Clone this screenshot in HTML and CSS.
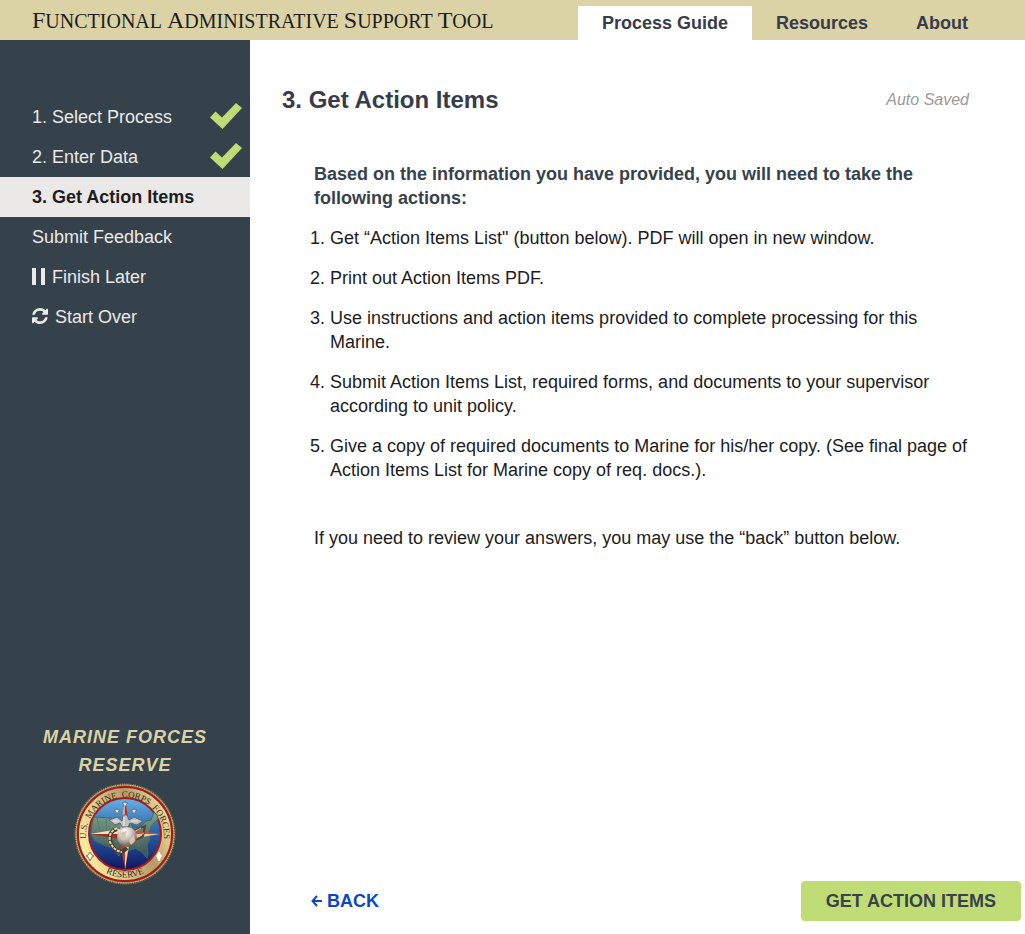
FILE: index.html
```html
<!DOCTYPE html>
<html lang="en">
<head>
<meta charset="utf-8">
<title>Functional Administrative Support Tool</title>
<link rel="stylesheet" href="styles.css">
</head>
<body>
<header class="topbar">
  <div class="brand"><span class="word">Functional</span> <span class="word">Administrative</span> <span class="word">Support</span> <span class="word">Tool</span></div>
  <nav class="tabs" aria-label="Main">
    <a class="tab tab-active" href="#guide">Process Guide</a>
    <a class="tab" href="#resources">Resources</a>
    <a class="tab" href="#about">About</a>
  </nav>
</header>
<div class="layout">
  <aside class="sidebar">
    <nav class="steps" aria-label="Steps">
      <a class="step" href="#select">1. Select Process
        <svg class="check" viewBox="0 0 32 28" aria-hidden="true"><path d="M0 15.500 5.500 9.500 12 15.500 26 1 32 6 12.500 27Z"/></svg></a>
      <a class="step" href="#enter">2. Enter Data
        <svg class="check" viewBox="0 0 32 28" aria-hidden="true"><path d="M0 15.500 5.500 9.500 12 15.500 26 1 32 6 12.500 27Z"/></svg></a>
      <a class="step step-active" href="#items" aria-current="step">3. Get Action Items</a>
      <a class="step" href="#feedback">Submit Feedback</a>
      <a class="step" href="#later"><svg class="pause" viewBox="0 0 13 17" aria-hidden="true"><path d="M0 0H4V17H0ZM9 0H13V17H9Z"/></svg>Finish Later</a>
      <a class="step" href="#restart"><svg class="refresh" viewBox="0 0 1536 1536" aria-hidden="true"><path d="M1511 928q0 5-1 7-64 268-268 434.500T764 1536q-146 0-282.500-55T238 1324l-129 129q-19 19-45 19t-45-19-19-45V960q0-26 19-45t45-19h448q26 0 45 19t19 45-19 45l-137 137q71 66 161 102t187 36q134 0 250-65t186-179q11-17 53-117 8-23 30-23h192q13 0 22.500 9.500t9.500 22.500zm25-800v448q0 26-19 45t-45 19h-448q-26 0-45-19t-19-45 19-45l138-138Q969 256 768 256q-134 0-250 65T332 500q-11 17-53 117-8 23-30 23H50q-13 0-22.500-9.500T18 608v-7q65-268 270-434.500T768 0q146 0 284 55.500T1297 212l130-129q19-19 45-19t45 19 19 45z"/></svg>Start Over</a>
    </nav>
    <div class="unit">
      <p class="unit-name">Marine Forces Reserve</p>
      <svg class="seal" viewBox="0 0 102 102" role="img" aria-label="U.S. Marine Corps Forces Reserve seal">
        <defs>
          <linearGradient id="gold" x1="0" y1=".7" x2="1" y2=".3"><stop offset="0" stop-color="#fff3a2"/><stop offset=".35" stop-color="#dcc88a"/><stop offset=".65" stop-color="#b59a68"/><stop offset="1" stop-color="#f5e3a0"/></linearGradient>
          <linearGradient id="sky" x1="0" y1="0" x2="0" y2="1"><stop offset="0" stop-color="#68b2e7"/><stop offset=".5" stop-color="#245da5"/><stop offset="1" stop-color="#10155c"/></linearGradient>
          <linearGradient id="land" x1="0" y1="0" x2="0" y2="1"><stop offset="0" stop-color="#7ba28b"/><stop offset="1" stop-color="#38514d"/></linearGradient>
          <radialGradient id="globe" cx=".4" cy=".25" r=".8"><stop offset="0" stop-color="#fff"/><stop offset=".45" stop-color="#c9c3bd"/><stop offset="1" stop-color="#5a4a44"/></radialGradient>
          <path id="arc-top" d="M13.500 64A39 39 0 1 1 88.500 64"/>
          <path id="arc-bottom" d="M15 75A43 43 0 0 0 87 75"/>
          <path id="star" d="M0-3 .8-.9 3-.9 1.200.5 1.900 2.700 0 1.400-1.900 2.700-1.200.5-3-.9-.8-.9Z"/>
        </defs>
        <circle cx="51" cy="51" r="50.500" fill="#8d7e52"/>
        <circle cx="51" cy="51" r="50" fill="none" stroke="#29261e" stroke-width="1" stroke-dasharray="1 1.200"/>
        <circle cx="51" cy="51" r="49" fill="none" stroke="#d6c78d" stroke-width="1" stroke-dasharray="1.500 1"/>
        <circle cx="51" cy="51" r="47" fill="url(#gold)" stroke="#a9161b" stroke-width="2"/>
        <circle cx="51" cy="51" r="36" fill="url(#sky)" stroke="#a51a22" stroke-width="2"/>
        <path d="M20 34 37 35 43 37 52 37 57 40 59 45 66 44 72 38 77 37 80 29 83 32 84 36 81 39 77 44 75 51 76 56 73 62 74 71 73 75 68 69 61 65 54 68 49 65 45 73 38 65 30 62 21 58 17 51 18 41Z" fill="url(#land)" stroke="#416b61" stroke-width="1"/>
        <path d="M23 35 28 57M32 36 34 61M42 38V59M60 45 65 64" stroke="#537e6b" stroke-width="1" fill="none"/>
        <path d="M51 16 46 47 51 51Z" fill="#e0a69b"/><path d="M51 16 56 47 51 51Z" fill="#b93223"/>
        <path d="M16 51 45 46 51 51Z" fill="#f3e0c0"/><path d="M16 51 45 56 51 51Z" fill="#9e302a"/>
        <path d="M86 51 56 46 51 51Z" fill="#c4543c"/><path d="M86 51 56 56 51 51Z" fill="#f0c8a0"/>
        <path d="M51 87 46 56 51 51Z" fill="#b43a2e"/><path d="M51 87 56 56 51 51Z" fill="#f1d890"/>
        <path d="M35 37 43 34 48 38 49 32 53 32 55 37 60 34 69 38 63 42 56 40 54 44H48L46 40 41 42Z" fill="#bdc1c3" stroke="#5c6670" stroke-width="1"/>
        <path d="M39 38 45 38M57 38 64 38M50 34V43" stroke="#f4eee6" fill="none"/>
        <path d="M43 46Q33 49 37 60Q40 69 48 69L53 65" fill="none" stroke="#4a3b2e" stroke-width="4"/>
        <path d="M43 45Q34 49 36 59Q40 68 48 69" fill="none" stroke="#e0d3a8" stroke-width="2" stroke-dasharray="3 1"/>
        <path d="M56 50 66 45 71 43 69 53 60 58" fill="none" stroke="#5a4335" stroke-width="2"/>
        <path d="M58 50 67 45M62 54 70 50" stroke="#ddc39a" stroke-width="1"/>
        <circle cx="53" cy="54" r="10" fill="url(#globe)"/>
        <path d="M46 50 53 48 51 55 47 57ZM55 57 60 52 61 58 57 62Z" fill="#d7c6a3"/>
        <g fill="#f1eee9" stroke="#4b4e5e" stroke-width=".5"><use href="#star" x="51" y="21"/><use href="#star" x="43" y="28"/><use href="#star" x="60" y="28"/></g>
        <path d="M16 69 18 72 20 73 18 74 16 78 14 74 12 73 14 72Z" fill="#fff3d1" stroke="#827b72"/>
        <path d="M85 69 87 73 85 78 83 73ZM82 73H88" fill="#fff" stroke="#fff"/>
        <text class="seal-text"><textPath href="#arc-top" startOffset="50%" text-anchor="middle">U.S.&#160; MARINE&#160; CORPS&#160; FORCES</textPath></text>
        <text class="seal-text"><textPath href="#arc-bottom" startOffset="50%" text-anchor="middle">RESERVE</textPath></text>
      </svg>
    </div>
  </aside>
  <main class="content">
    <div class="heading">
      <h1 class="title">3. Get Action Items</h1>
      <span class="saved">Auto Saved</span>
    </div>
    <section class="instructions">
      <p class="lead">Based on the information you have provided, you will need to take the<br>following actions:</p>
      <ol class="actions">
        <li>Get “Action Items List" (button below). PDF will open in new window.</li>
        <li>Print out Action Items PDF.</li>
        <li>Use instructions and action items provided to complete processing for this<br>Marine.</li>
        <li>Submit Action Items List, required forms, and documents to your supervisor<br>according to unit policy.</li>
        <li>Give a copy of required documents to Marine for his/her copy. (See final page of<br>Action Items List for Marine copy of req. docs.).</li>
      </ol>
      <p class="review">If you need to review your answers, you may use the “back” button below.</p>
    </section>
    <div class="buttons">
      <a class="back" href="#enter"><svg class="arrow" viewBox="0 0 11 12" aria-hidden="true"><path d="M6 1 1.500 6 6 11M2 6H11"/></svg>BACK</a>
      <button class="primary" type="button">GET ACTION ITEMS</button>
    </div>
  </main>
</div>
</body>
</html>
```
FILE: styles.css
```css
* { box-sizing: border-box; }
body {
  margin: 0;
  min-height: 100vh;
  display: flex;
  flex-direction: column;
  font: 18px/24px "Liberation Sans", Arial, sans-serif;
  color: #201c1d;
  background: #fff;
}
a { color: inherit; text-decoration: none; }
.topbar {
  display: flex;
  justify-content: space-between;
  align-items: flex-end;
  padding: 6px 33px 0 32px;
  background: #dbd3a5;
}
.brand {
  font: 20px/24px "Liberation Serif", "Times New Roman", serif;
  text-transform: uppercase;
  padding-bottom: 7px;
  white-space: nowrap;
}
.word { display: inline-block; }
.word::first-letter { font-size: 24px; }
.tabs { display: flex; }
.tab {
  padding: 5px 24px;
  font-weight: bold;
  color: #363c4a;
  white-space: nowrap;
}
.tab-active { background: #fff; }
.layout { flex: 1; display: flex; }
.sidebar {
  flex: 0 0 250px;
  display: flex;
  flex-direction: column;
  justify-content: space-between;
  padding: 57px 0 49px;
  background: #36424b;
  color: #ebe9e7;
}
.step {
  display: flex;
  align-items: center;
  height: 40px;
  padding: 0 8px 0 32px;
}
.step-active { background: #ebe9e7; color: #201c1d; font-weight: bold; }
.step svg { fill: currentColor; }
.step .check { width: 32px; height: 28px; margin: 0 0 2px auto; fill: #bfdc74; }
.pause { width: 13px; height: 17px; margin: 0 7px 2px 0; }
.refresh { width: 16px; height: 16px; margin: 0 7px 2px 0; }
.unit { display: flex; flex-direction: column; align-items: center; }
.unit-name {
  width: 190px;
  margin: 0 0 4px;
  font: italic bold 18px/28px "Liberation Sans", Arial, sans-serif;
  letter-spacing: 1px;
  text-align: center;
  text-transform: uppercase;
  color: #dbd3a5;
}
.seal { width: 102px; height: 102px; }
.seal-text { font: 9px "Liberation Serif", serif; fill: #34291a; }
.content {
  flex: 1;
  min-width: 0;
  display: flex;
  flex-direction: column;
  padding: 44px 4px 13px 32px;
}
.heading {
  display: flex;
  justify-content: space-between;
  align-items: center;
  padding-right: 52px;
}
.title { margin: 0; font-size: 24px; line-height: 32px; color: #363c4a; }
.saved { font-size: 16px; font-style: italic; color: #999; }
.instructions { padding: 46px 0 0 32px; }
.lead { margin: 0 0 16px; font-weight: bold; color: #37424b; }
.actions { margin: 0; padding-left: 16px; }
.actions li { margin-bottom: 16px; }
.review { margin: 44px 0 0; }
.buttons {
  display: flex;
  justify-content: space-between;
  align-items: center;
  margin-top: auto;
  padding-left: 29px;
}
.back { display: flex; align-items: center; gap: 5px; font-weight: bold; color: #0c45cc; }
.arrow { width: 11px; height: 12px; fill: none; stroke: currentColor; stroke-width: 2; }
.primary {
  height: 40px;
  padding: 0 25px;
  border: 0;
  border-radius: 4px;
  background: #c0dc74;
  color: #37424b;
  font: bold 18px/24px "Liberation Sans", Arial, sans-serif;
}
```
